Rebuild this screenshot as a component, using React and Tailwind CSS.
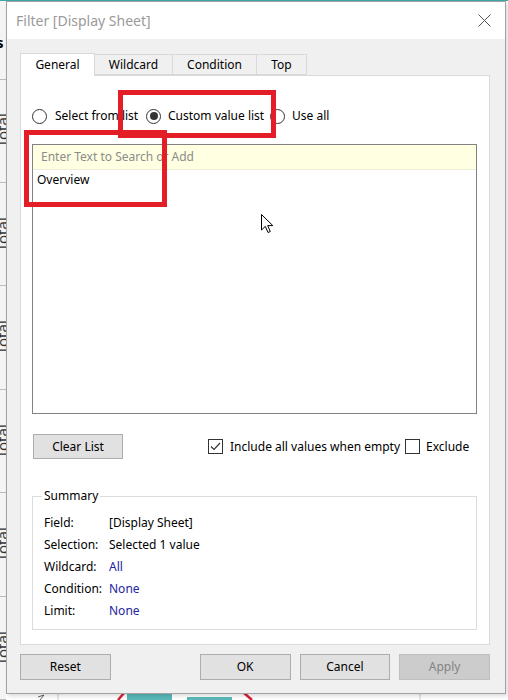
import React from "react";

const Radio = ({ checked }) => (
	<span className="w-[15px] h-[15px] shrink-0 rounded-full border border-[#333] bg-white flex items-center justify-center">
		{checked && <span className="w-[8px] h-[8px] rounded-full bg-[#333]" />}
	</span>
);

const Check = ({ checked }) => (
	<span className="w-[15px] h-[15px] shrink-0 border border-[#333] bg-white flex items-center justify-center">
		{checked && (
			<svg width="11" height="9" viewBox="0 0 11 9">
				<path d="M1 4.5 L4 7.5 L10 1" fill="none" stroke="#333" strokeWidth="1.2" />
			</svg>
		)}
	</span>
);

const Button = ({ children, disabled, className = "" }) => (
	<button
		className={`${
			disabled ? "bg-[#cccccc] border-[#bfbfbf] text-[#838383]" : "bg-[#e1e1e1] border-[#adadad] text-black"
		} h-[26px] w-[91px] border text-[12px] ${className}`}
	>
		{children}
	</button>
);

const SummaryRow = ({ label, value, blue }) => (
	<div className="flex items-center h-[22px]">
		<span className="w-[65px]">{label}</span>
		<span className={blue ? "text-[#2424a0]" : ""}>{value}</span>
	</div>
);

export default function App() {
	return (
		<div className="relative w-[508px] h-[700px] overflow-hidden bg-white font-['Noto_Sans',sans-serif] text-[12px] text-black">
			{/* app behind the dialog */}
			<div className="h-[1px] bg-[#3aa8a8] w-full" />
			<div className="absolute left-0 top-[1px] w-[6px] h-[699px] flex flex-col bg-[#f4f4f4]">
				<div className="h-[85px] border-b border-[#bdbdbd] flex items-center">
					<span className="text-[15px] font-bold -ml-[4px] mt-[4px]">s</span>
				</div>
				{["Total", "Total", "Total", "Total", "Total", "Total"].map((t, i) => (
					<div key={i} className="h-[112px] border-b border-[#bdbdbd] flex items-center justify-center">
						<span className="-rotate-90 text-[15px] text-[#333] -ml-[2px]">{t}</span>
					</div>
				))}
			</div>
			<svg className="absolute left-0 top-[692px]" width="508" height="8" viewBox="0 0 508 8">
				<rect x="127" y="1" width="45" height="7" fill="#5ab8b8" />
				<rect x="187" y="5" width="45" height="3" fill="#5ab8b8" />
				<line x1="58" y1="0" x2="58" y2="8" stroke="#cfcfcf" />
				<line x1="420" y1="0" x2="420" y2="8" stroke="#cfcfcf" />
				<path d="M118 8 L124 1" stroke="#d82030" strokeWidth="2.5" fill="none" />
				<path d="M244 1 L252 8" stroke="#d82030" strokeWidth="2.5" fill="none" />
				<path d="M38 5 L44 3 M44 3 L40 8" stroke="#666" strokeWidth="1" fill="none" />
			</svg>

			{/* dialog */}
			<div className="absolute left-[6px] top-[1px] w-[500px] h-[693px] flex flex-col border border-[#a3a3a3] shadow-[2px_2px_4px_rgba(0,0,0,0.15)]">
				<div className="h-[37px] bg-white flex items-center justify-between pl-[9px] pr-[14px]">
					<span className="text-[14px] text-[#9a9a9a]">Filter [Display Sheet]</span>
					<svg width="13" height="13" viewBox="0 0 13 13">
						<path d="M0.5 0.5 L12.5 12.5 M12.5 0.5 L0.5 12.5" stroke="#555" strokeWidth="1" />
					</svg>
				</div>
				<div className="flex-1 bg-[#f0f0f0] pl-[13px] pr-[15px] pt-[14px] flex flex-col">
					<div className="flex items-end h-[22px]">
						<div className="relative z-10 -mb-px w-[75px] h-[23px] bg-white border border-b-0 border-[#d9d9d9] flex items-center justify-center">
							General
						</div>
						<div className="w-[78px] h-[21px] border border-l-0 border-[#d9d9d9] flex items-center justify-center">
							Wildcard
						</div>
						<div className="w-[84px] h-[21px] border border-l-0 border-[#d9d9d9] flex items-center justify-center">
							Condition
						</div>
						<div className="w-[50px] h-[21px] border border-l-0 border-[#d9d9d9] flex items-center justify-center">
							Top
						</div>
					</div>
					<div className="h-[570px] bg-white border border-[#d9d9d9] flex flex-col px-[11px]">
						<div className="pt-[31px] flex items-center">
							<div className="w-[114px] flex items-center gap-[8px]">
								<Radio />
								<span>Select from list</span>
							</div>
							<div className="w-[124px] flex items-center gap-[7px]">
								<Radio checked />
								<span>Custom value list</span>
							</div>
							<div className="flex items-center gap-[7px]">
								<Radio />
								<span>Use all</span>
							</div>
						</div>
						<div className="mt-[19px] w-[445px] h-[270px] border border-[#828282] flex flex-col">
							<div className="h-[25px] bg-[#ffffe1] border-b border-[#ececd8] flex items-center pl-[8px] text-[#8c8c8c]">
								Enter Text to Search or Add
							</div>
							<div className="pl-[4px] pt-[1px] leading-[17px]">Overview</div>
						</div>
						<div className="mt-[20px] flex items-center h-[25px]">
							<Button className="!w-[90px] !h-[25px] ml-[1px]">Clear List</Button>
							<div className="ml-[85px] flex items-center gap-[7px]">
								<Check checked />
								<span>Include all values when empty</span>
							</div>
							<div className="ml-[5px] flex items-center gap-[6px]">
								<Check />
								<span>Exclude</span>
							</div>
						</div>
						<fieldset className="mt-[29px] w-[445px] border border-[#dcdcdc] pl-[11px] pt-[8px] pb-[7px]">
							<legend className="ml-[-2px] px-[2px] leading-[16px]">Summary</legend>
							<SummaryRow label="Field:" value="[Display Sheet]" />
							<SummaryRow label="Selection:" value="Selected 1 value" />
							<SummaryRow label="Wildcard:" value="All" blue />
							<SummaryRow label="Condition:" value="None" blue />
							<SummaryRow label="Limit:" value="None" blue />
						</fieldset>
					</div>
					<div className="mt-[9px] flex items-center">
						<Button>Reset</Button>
						<Button className="ml-[89px]">OK</Button>
						<Button className="ml-[9px]">Cancel</Button>
						<Button disabled className="ml-[9px]">
							Apply
						</Button>
					</div>
				</div>
			</div>

			{/* annotations */}
			<div className="absolute left-[118px] top-[90px] w-[158px] h-[48px] border-[5px] border-[#e41e26]" />
			<div className="absolute left-[24px] top-[130px] w-[143px] h-[77px] border-[5px] border-[#e41e26]" />

			{/* mouse pointer */}
			<svg className="absolute left-[261px] top-[214px]" width="13" height="20" viewBox="0 0 13 20">
				<path d="M0.5 0.5 L0.5 16 L4.3 12.4 L7 18.5 L9.3 17.5 L6.7 11.6 L11.8 11.6 Z" fill="white" stroke="black" strokeWidth="1" />
			</svg>
		</div>
	);
}
